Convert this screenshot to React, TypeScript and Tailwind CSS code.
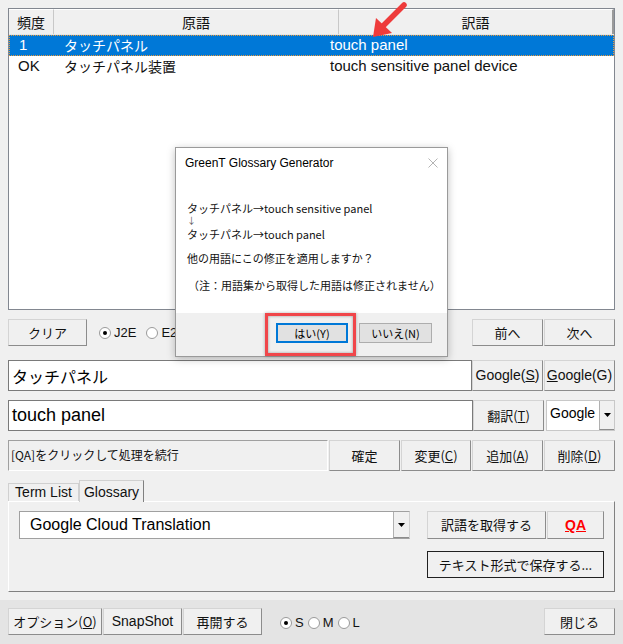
import React from 'react';

const FONT = "font-['Liberation_Sans','Noto_Sans_CJK_JP',sans-serif]";
const JP = "font-['Noto_Sans_CJK_JP','Liberation_Sans',sans-serif]";

function Btn({
  children,
  className = '',
}: {
  children: React.ReactNode;
  className?: string;
}) {
  return (
    <div
      className={`flex shrink-0 items-center justify-center border border-[#d4d4d4] border-b-[#8c8c8c] border-r-[#8c8c8c] bg-[#f0f0f0] text-[13px] text-[#111] ${className}`}
    >
      {children}
    </div>
  );
}

function Radio({ checked, label }: { checked?: boolean; label: string }) {
  return (
    <div className="flex items-center gap-[3px]">
      <span className="flex h-[12px] w-[12px] items-center justify-center rounded-full border border-[#9a9a9a] bg-white">
        {checked && <span className="h-[4px] w-[4px] rounded-full bg-black" />}
      </span>
      <span className="text-[13px] text-[#111]">{label}</span>
    </div>
  );
}

function DropArrow({ className = '' }: { className?: string }) {
  return (
    <div
      className={`flex items-center justify-center border-l border-[#b0b0b0] bg-[#f0f0f0] border-b border-b-[#8c8c8c] ${className}`}
    >
      <svg width="7" height="4" viewBox="0 0 7 4">
        <path d="M0 0h7L3.5 4z" fill="#000" />
      </svg>
    </div>
  );
}

export default function App() {
  return (
    <div className={`relative h-[644px] w-[623px] overflow-hidden bg-[#f0f0f0] ${FONT}`}>
      <div className="flex flex-col px-[8px] pt-[8px]">
        {/* term list */}
        <div className="flex h-[302px] flex-col border border-[#828790] bg-white">
          <div className="flex h-[26px] border-b border-[#e5e5e5] bg-[#f0f0f0] text-[14px] text-[#111]">
            <div className={`flex w-[45px] items-center justify-center border-r border-[#c8c8c8] border-t border-t-white ${JP}`}>
              頻度
            </div>
            <div className={`flex w-[285px] items-center justify-center border-r border-[#c8c8c8] border-t border-t-white ${JP}`}>
              原語
            </div>
            <div className={`flex flex-1 items-center justify-center border-r-2 border-[#9a9a9a] border-t border-t-white ${JP}`}>
              訳語
            </div>
          </div>
          <div className="flex h-[21px] items-center border border-dotted border-[#e89a3c] bg-[#0078d7] text-[15px] text-white">
            <span className="w-[54px] pl-[9px]">1</span>
            <span className={`w-[266px] ${JP} text-[14px]`}>タッチパネル</span>
            <span>touch panel</span>
          </div>
          <div className="flex h-[21px] items-center text-[15px] text-[#111]">
            <span className="w-[55px] pl-[9px]">OK</span>
            <span className={`w-[266px] ${JP} text-[14px]`}>タッチパネル装置</span>
            <span>touch sensitive panel device</span>
          </div>
        </div>

        {/* clear / direction / nav */}
        <div className="mt-[9px] flex h-[27px] items-center">
          <Btn className={`h-full w-[79px] ${JP}`}>クリア</Btn>
          <div className="ml-[12px] flex items-center gap-[10px]">
            <Radio checked label="J2E" />
            <Radio label="E2J" />
          </div>
          <div className="flex-1" />
          <Btn className={`h-full w-[71px] ${JP}`}>前へ</Btn>
          <Btn className={`ml-[1px] h-full w-[71px] ${JP}`}>次へ</Btn>
        </div>

        {/* source */}
        <div className="mt-[14px] flex h-[31px]">
          <div className={`flex flex-1 items-center border border-[#7a7a7a] bg-white pl-[3px] text-[16px] text-black ${JP}`}>
            タッチパネル
          </div>
          <Btn className="h-full w-[71px] text-[14px]">
            Google(<u>S</u>)
          </Btn>
          <Btn className="ml-[1px] h-full w-[71px] text-[14px]">
            <u>G</u>oogle(G)
          </Btn>
        </div>

        {/* target */}
        <div className="mt-[9px] flex h-[31px]">
          <div className="flex flex-1 items-center border border-[#7a7a7a] bg-white pl-[3px] text-[18px] text-black">
            touch panel
          </div>
          <Btn className={`h-full w-[71px] ${JP}`}>
            翻訳(<u>T</u>)
          </Btn>
          <div className="ml-[2px] flex h-full w-[69px] border border-[#c8c8c8] bg-white">
            <span className="flex-1 pl-[3px] pt-[2px] text-[14px] text-black">Google</span>
            <DropArrow className="w-[15px] self-stretch" />
          </div>
        </div>

        {/* status / actions */}
        <div className="mt-[9px] flex h-[31px]">
          <div className={`flex flex-1 items-start border border-[#a0a0a0] border-r-white border-b-white pl-[2px] pt-[5px] text-[12px] text-[#111] ${JP}`}>
            [QA]をクリックして処理を続行
          </div>
          <Btn className={`ml-[1px] h-full w-[71px] ${JP}`}>確定</Btn>
          <Btn className={`ml-[1px] h-full w-[70px] ${JP}`}>
            変更(<u>C</u>)
          </Btn>
          <Btn className={`ml-[1px] h-full w-[71px] ${JP}`}>
            追加(<u>A</u>)
          </Btn>
          <Btn className={`ml-[1px] h-full w-[71px] ${JP}`}>
            削除(<u>D</u>)
          </Btn>
        </div>

        {/* tabs */}
        <div className="mt-[9px] flex h-[21px] items-end">
          <div className="flex h-[18px] w-[71px] items-center justify-center border border-b-0 border-[#d0d0d0] bg-[#f0f0f0] text-[14px] text-[#111]">
            Term List
          </div>
          <div className="relative -mb-px flex h-[22px] w-[65px] items-start justify-center border border-b-0 border-[#d0d0d0] border-r-[#808080] bg-[#f0f0f0] pt-[1px] text-[14px] text-[#111]">
            Glossary
          </div>
        </div>
        <div className="flex h-[91px] flex-col border border-white border-b-[#808080] border-r-[#808080] px-[10px] pt-[9px]">
          <div className="flex h-[28px]">
            <div className="flex w-[391px] border border-[#a0a0a0] border-r-[#d0d0d0] bg-white">
              <span className="flex flex-1 items-center pl-[10px] text-[16px] text-black">
                Google Cloud Translation
              </span>
              <DropArrow className="w-[16px] self-stretch" />
            </div>
            <Btn className={`ml-[17px] h-full w-[119px] ${JP}`}>訳語を取得する</Btn>
            <Btn className="ml-[1px] h-full w-[57px] text-[14px] font-bold text-[#ff0000]">
              <u>QA</u>
            </Btn>
          </div>
          <div className="mt-[12px] flex h-[27px] justify-start pl-[408px]">
            <div className={`flex w-[177px] items-center justify-center border border-[#202020] bg-[#f0f0f0] text-[13px] text-[#111] ${JP}`}>
              テキスト形式で保存する...
            </div>
          </div>
        </div>
      </div>

      {/* bottom bar */}
      <div className="mt-[8px] flex h-[44px] items-start bg-[#e4e4e4] px-[8px] pt-[8px]">
        <Btn className={`h-[27px] w-[94px] ${JP}`}>
          オプション(<u>O</u>)
        </Btn>
        <Btn className="ml-[1px] h-[27px] w-[79px] text-[14px]">SnapShot</Btn>
        <Btn className={`ml-[1px] h-[27px] w-[79px] ${JP}`}>再開する</Btn>
        <div className="ml-[18px] flex h-[27px] items-center gap-[4px] pt-[3px]">
          <Radio checked label="S" />
          <Radio label="M" />
          <Radio label="L" />
        </div>
        <div className="flex-1" />
        <Btn className={`h-[27px] w-[71px] ${JP}`}>閉じる</Btn>
      </div>

      {/* confirmation dialog */}
      <div className="absolute left-[175px] top-[147px] flex h-[210px] w-[273px] flex-col border border-[#9a9a9a] bg-white shadow-[0_2px_8px_rgba(0,0,0,0.25)]">
        <div className="flex h-[30px] items-center justify-between pl-[9px] pr-[9px]">
          <span className="text-[12px] text-black">GreenT Glossary Generator</span>
          <svg width="10" height="10" viewBox="0 0 10 10">
            <path d="M0.5 0.5l9 9M9.5 0.5l-9 9" stroke="#b4b4b4" strokeWidth="1" />
          </svg>
        </div>
        <div className={`flex flex-1 flex-col pl-[11px] text-[11px] leading-[13px] text-[#111] ${JP}`}>
          <div className="mt-[24px] h-[13px]">タッチパネル→touch sensitive panel</div>
          <div className="h-[13px] text-[9px] leading-[11px] text-[#555]">↓</div>
          <div className="h-[13px]">タッチパネル→touch panel</div>
          <div className="mt-[11px]">他の用語にこの修正を適用しますか？</div>
          <div className="mt-[14px] pl-[1px]">（注：用語集から取得した用語は修正されません）</div>
        </div>
        <div className="flex h-[43px] items-start bg-[#f0f0f0] pl-[100px] pt-[10px]">
          <div className={`flex h-[20px] w-[72px] items-center justify-center border-2 border-[#0078d7] bg-[#e1e1e1] text-[11px] text-black ${JP}`}>
            はい(Y)
          </div>
          <div className={`ml-[11px] flex h-[20px] w-[73px] items-center justify-center border border-[#adadad] bg-[#e1e1e1] text-[11px] text-black ${JP}`}>
            いいえ(N)
          </div>
        </div>
      </div>

      {/* annotation highlight */}
      <div className="absolute left-[265px] top-[313px] h-[43px] w-[91px] border-[3px] border-[#f0464a] shadow-[inset_0_0_3px_rgba(0,0,0,0.35),0_0_3px_rgba(0,0,0,0.3)]" />

      {/* annotation arrow */}
      <svg className="absolute left-[364px] top-[0px]" width="48" height="44" viewBox="0 0 48 44">
        <path d="M40 5 L18 27" stroke="#ee3b3b" strokeWidth="5.5" strokeLinecap="round" />
        <path d="M9 37 L12 18 L28 33 Z" fill="#ee3b3b" />
      </svg>
    </div>
  );
}
